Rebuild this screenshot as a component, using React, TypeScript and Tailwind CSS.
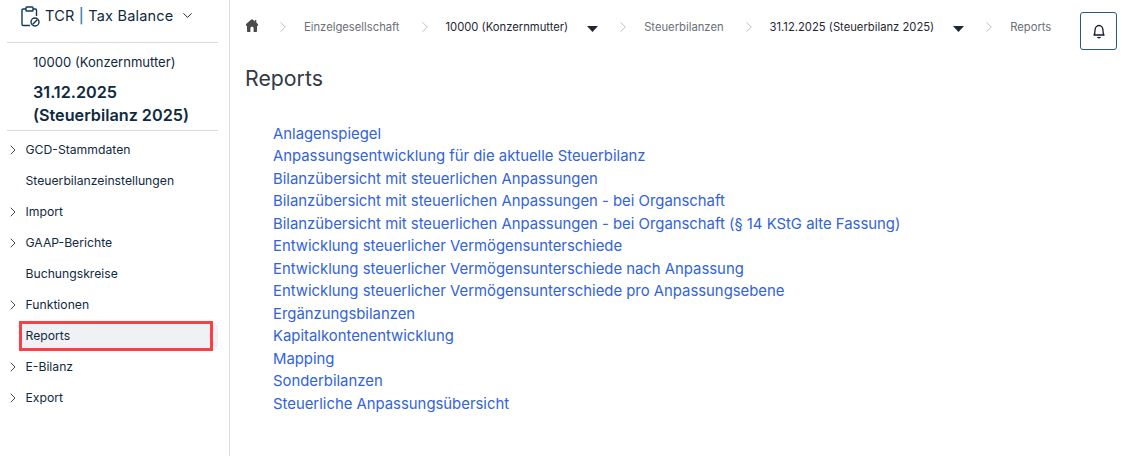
import { ChevronRight, ChevronDown } from "lucide-react";

const menu: [string, boolean][] = [
  ["GCD-Stammdaten", true],
  ["Steuerbilanzeinstellungen", false],
  ["Import", true],
  ["GAAP-Berichte", true],
  ["Buchungskreise", false],
  ["Funktionen", true],
  ["Reports", false],
  ["E-Bilanz", true],
  ["Export", true],
];

const links = [
  "Anlagenspiegel",
  "Anpassungsentwicklung für die aktuelle Steuerbilanz",
  "Bilanzübersicht mit steuerlichen Anpassungen",
  "Bilanzübersicht mit steuerlichen Anpassungen - bei Organschaft",
  "Bilanzübersicht mit steuerlichen Anpassungen - bei Organschaft (§ 14 KStG alte Fassung)",
  "Entwicklung steuerlicher Vermögensunterschiede",
  "Entwicklung steuerlicher Vermögensunterschiede nach Anpassung",
  "Entwicklung steuerlicher Vermögensunterschiede pro Anpassungsebene",
  "Ergänzungsbilanzen",
  "Kapitalkontenentwicklung",
  "Mapping",
  "Sonderbilanzen",
  "Steuerliche Anpassungsübersicht",
];

function Sep() {
  return <ChevronRight className="w-[18px] h-[18px] text-[#a8a8a8] shrink-0 -mr-[4px]" strokeWidth={1} />;
}

function Caret() {
  return (
    <svg width="11" height="6" viewBox="0 0 11 6" className="shrink-0 mt-[3px] ml-[3px]">
      <path d="M0 0H11L5.5 6Z" fill="#1f2733" />
    </svg>
  );
}

export default function App() {
  return (
    <div className="flex h-[456px] w-[1127px] overflow-hidden bg-white font-['Inter',sans-serif] text-[#0f2a40]">
      <aside className="w-[230px] shrink-0 border-r border-[#dcdde3] pl-[7px] pr-[11px]">
        <div className="h-[43px] border-b border-[#d8dae2] flex items-start pl-[14px] pt-[5px] gap-[5px]">
          <svg width="19" height="21" viewBox="0 0 19 21" fill="none" className="mt-[1px] shrink-0" stroke="#123a56" strokeWidth="1.4">
            <path d="M5 3H2.2C1.5 3 1 3.5 1 4.2V18.3C1 19 1.5 19.5 2.2 19.5H9" />
            <path d="M12 3H14.3C15 3 15.5 3.5 15.5 4.2V10" />
            <rect x="5" y="1" width="7" height="4" rx="0.8" />
            <circle cx="14" cy="16" r="4" />
            <path d="M11.5 18.5L16.5 13.5" />
          </svg>
          <span className="text-[14.5px] leading-[22px] whitespace-nowrap tracking-[0.2px]">
            TCR <span className="text-[#2f7fb0] font-medium">|</span> Tax Balance
          </span>
          <ChevronDown className="w-[15px] h-[15px] mt-[3px] ml-[2px]" strokeWidth={1.6} />
        </div>
        <div className="h-[88px] border-b border-[#d8dae2] pl-[26px] pt-[9px]">
          <div className="text-[13.05px] leading-[20px] whitespace-nowrap">10000 (Konzernmutter)</div>
          <div className="text-[16.2px] leading-[23px] font-semibold mt-[9px] whitespace-nowrap">
            31.12.2025
            <br />
            (Steuerbilanz 2025)
          </div>
        </div>
        <nav className="flex flex-col pt-[4px]">
          {menu.map(([label, hasChevron]) => (
            <div
              key={label}
              className={`relative h-[29px] my-[1px] ml-[12px] flex items-center rounded-md pl-[6.5px] text-[12.2px] whitespace-nowrap ${label === "Reports" ? "bg-[#f0f1f4]" : ""}`}
            >
              {hasChevron && (
                <ChevronRight className="absolute -left-[14px] top-[6px] w-[16px] h-[16px]" strokeWidth={1.25} />
              )}
              {label}
              {label === "Reports" && (
                <div className="absolute left-0 right-[5px] -top-[1px] bottom-0 border-[3px] border-[#fb3f45]" />
              )}
            </div>
          ))}
        </nav>
      </aside>
      <main className="flex-1 min-w-0 pl-[16px] pr-[10px]">
        <div className="flex items-start h-[64px] pt-[12px]">
          <div className="flex items-center gap-[16px] h-[30px] text-[11.24px] text-[#6b6f76] whitespace-nowrap flex-1 min-w-0">
            <svg width="12" height="13" viewBox="0 0 12 13" className="shrink-0 -mt-[4px]">
              <path d="M6 0.3C5.6 0.3 5.3 0.5 5 0.7L0.4 4.7C0.1 5 0 5.3 0 5.7V6.6C0 6.9 0.3 7 0.6 7H1V12C1 12.5 1.4 13 2 13H4.4V9.4C4.4 8.5 5 7.8 6 7.8C7 7.8 7.6 8.5 7.6 9.4V13H10C10.6 13 11 12.5 11 12V7H11.4C11.7 7 12 6.9 12 6.6V5.7C12 5.3 11.9 5 11.6 4.7L10.3 3.6V1.4C10.3 1.1 10.1 1 9.8 1H9.2C8.9 1 8.8 1.1 8.8 1.4V2.4L7 0.7C6.7 0.5 6.4 0.3 6 0.3Z" fill="#4b4b4b" />
            </svg>
            <Sep />
            <span>Einzelgesellschaft</span>
            <Sep />
            <span className="text-[#1f2733]">10000 (Konzernmutter)</span>
            <Caret />
            <Sep />
            <span>Steuerbilanzen</span>
            <Sep />
            <span className="text-[#1f2733]">31.12.2025 (Steuerbilanz 2025)</span>
            <Caret />
            <Sep />
            <span>Reports</span>
          </div>
          <button className="w-[37px] h-[38px] border border-[#2e5a78] rounded-[3px] flex items-center justify-center shrink-0">
            <svg width="14" height="15" viewBox="0 0 14 15" fill="none" stroke="#111827" strokeWidth="1.3">
              <path d="M2 11C3 10 3 9 3 6.5C3 3.8 4.8 1.5 7 1.5C9.2 1.5 11 3.8 11 6.5C11 9 11 10 12 11Z" strokeLinejoin="round" />
              <path d="M5.5 13C6 14 8 14 8.5 13" />
            </svg>
          </button>
        </div>
        <h1 className="text-[21.3px] leading-[28px] text-[#333a42] -ml-[1px]">Reports</h1>
        <div className="pl-[27px] mt-[30.5px] flex flex-col text-[#3263dc] text-[14.87px] leading-[22.5px] whitespace-nowrap">
          {links.map((l) => (
            <a key={l}>{l}</a>
          ))}
        </div>
      </main>
    </div>
  );
}
